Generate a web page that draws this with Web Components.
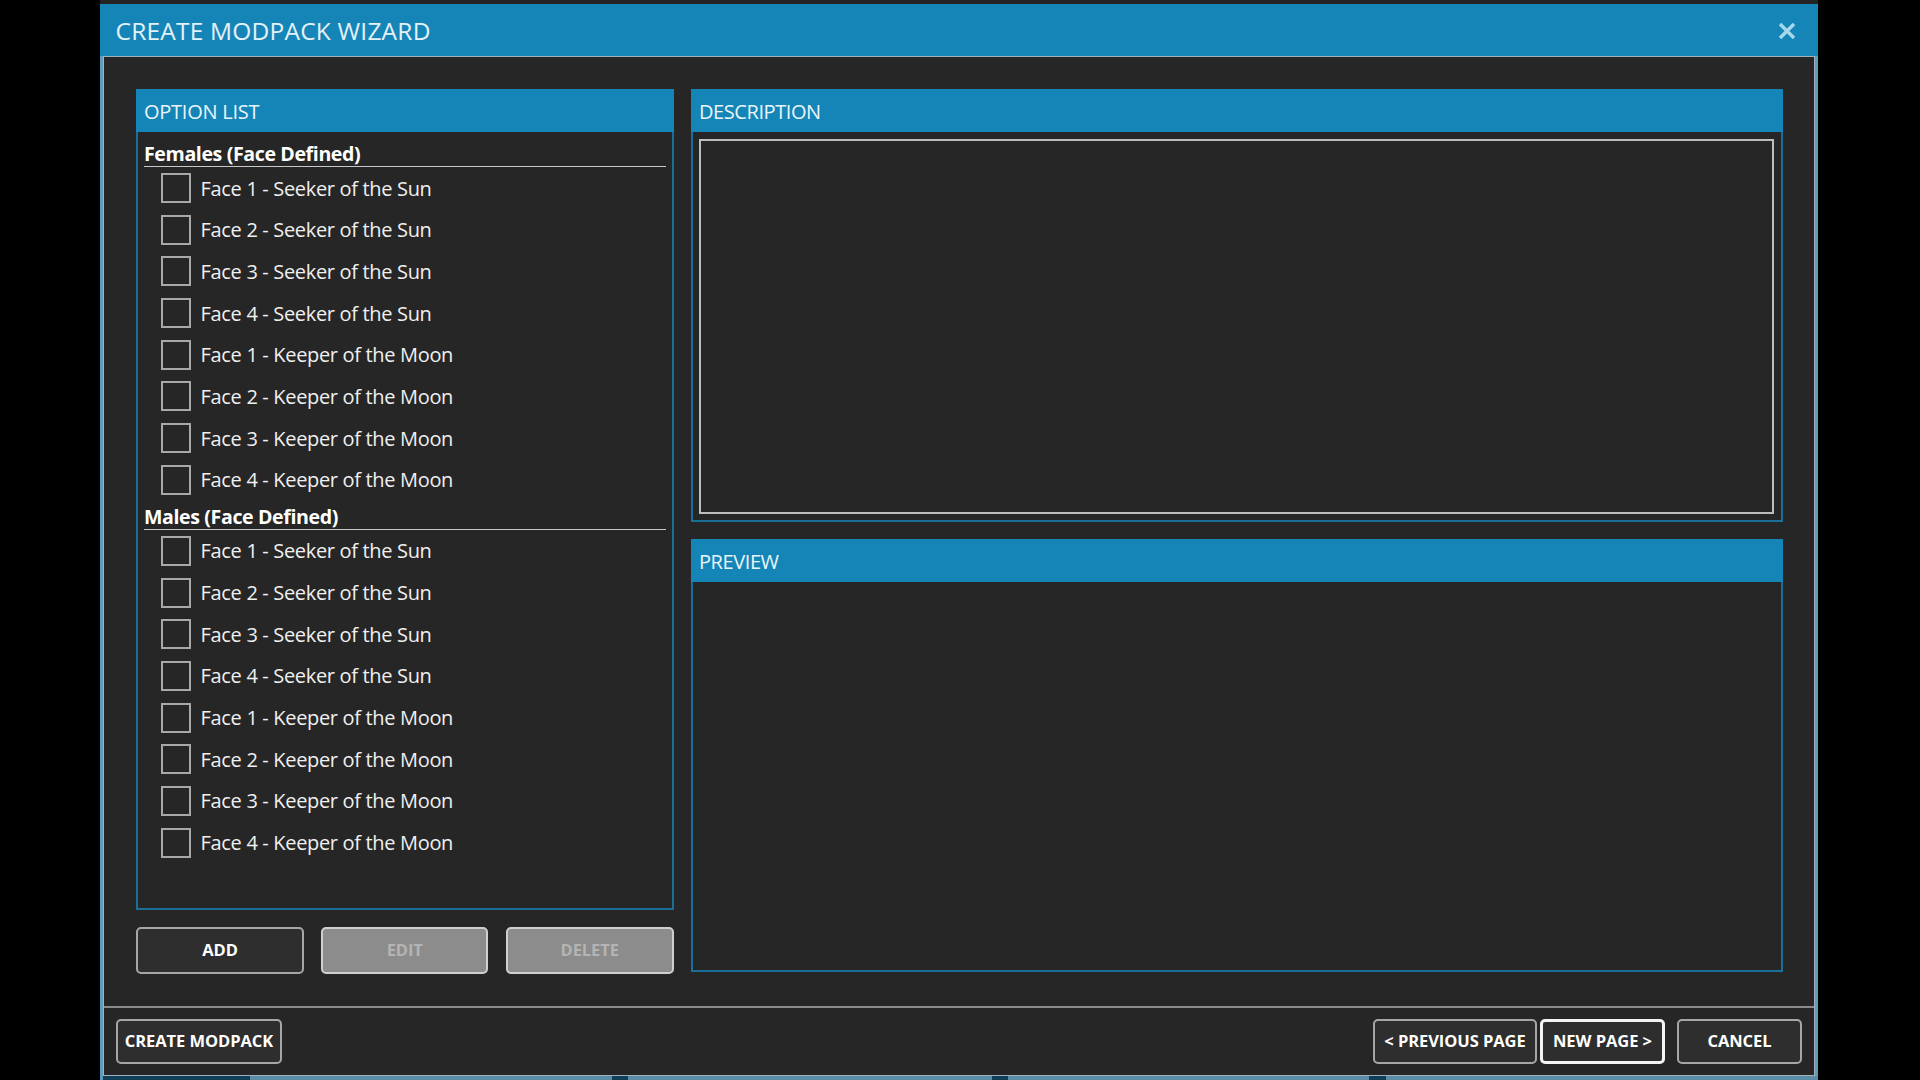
<!DOCTYPE html>
<html><head><meta charset="utf-8"><title>Create Modpack Wizard</title>
<style>
html,body{margin:0;padding:0;background:#000;height:100%;overflow:hidden}
body{font-family:"Open Sans","Liberation Sans",sans-serif;color:#fff}
</style></head><body>
<wizard-window heading="CREATE MODPACK WIZARD">
  <wizard-panel heading="OPTION LIST" slot="list" spacing="-.25px">
    <option-group label="Females (Face Defined)">
      <option-row>Face 1 - Seeker of the Sun</option-row>
      <option-row>Face 2 - Seeker of the Sun</option-row>
      <option-row>Face 3 - Seeker of the Sun</option-row>
      <option-row>Face 4 - Seeker of the Sun</option-row>
      <option-row>Face 1 - Keeper of the Moon</option-row>
      <option-row>Face 2 - Keeper of the Moon</option-row>
      <option-row>Face 3 - Keeper of the Moon</option-row>
      <option-row>Face 4 - Keeper of the Moon</option-row>
    </option-group>
    <option-group label="Males (Face Defined)">
      <option-row>Face 1 - Seeker of the Sun</option-row>
      <option-row>Face 2 - Seeker of the Sun</option-row>
      <option-row>Face 3 - Seeker of the Sun</option-row>
      <option-row>Face 4 - Seeker of the Sun</option-row>
      <option-row>Face 1 - Keeper of the Moon</option-row>
      <option-row>Face 2 - Keeper of the Moon</option-row>
      <option-row>Face 3 - Keeper of the Moon</option-row>
      <option-row>Face 4 - Keeper of the Moon</option-row>
    </option-group>
  </wizard-panel>
  <wizard-button slot="actions" style="width:168px">ADD</wizard-button>
  <wizard-button slot="actions" disabled style="width:167px">EDIT</wizard-button>
  <wizard-button slot="actions" disabled style="width:168.5px">DELETE</wizard-button>
  <wizard-panel heading="DESCRIPTION" slot="description"><text-box></text-box></wizard-panel>
  <wizard-panel heading="PREVIEW" slot="preview"></wizard-panel>
  <wizard-button slot="footer-left" style="width:166px;height:45px">CREATE MODPACK</wizard-button>
  <wizard-button slot="footer-right" style="width:164px;height:45px;margin-right:3px">&lt; PREVIOUS PAGE</wizard-button>
  <wizard-button slot="footer-right" primary style="width:125px;height:45px;margin-right:12px">NEW PAGE &gt;</wizard-button>
  <wizard-button slot="footer-right" style="width:125px;height:45px">CANCEL</wizard-button>
</wizard-window>
<script>
function def(name, html){
  customElements.define(name, class extends HTMLElement{
    constructor(){super();this.attachShadow({mode:'open'}).innerHTML=html(this);}
  });
}
def('wizard-window',()=>`<style>
:host{display:block;width:1718px;height:1080px;margin-left:100px;box-sizing:border-box;padding-top:4px;
  background:linear-gradient(#232323 4px,#5f9bbb 4px);
  font-family:"Open Sans","Liberation Sans",sans-serif}
.bar{height:52px;background:#1585b8;display:flex;align-items:center;justify-content:space-between;padding:0 22px 0 15.5px;box-sizing:border-box}
.title{font-size:24.5px;letter-spacing:.2px;color:#e4f1f7;font-weight:400;padding-top:1px}
.bar svg{width:18px;height:18px;display:block;margin-top:1.5px}
.frame{margin:0 3px;height:1020px;box-sizing:border-box;border:1.5px solid #9fb3bf;background:#262626;display:flex;flex-direction:column}
.main{flex:1;min-height:0;display:grid;grid-template-columns:538px 1092px;column-gap:17px;padding:32px 0 32px 32px;box-sizing:border-box}
.left{display:flex;flex-direction:column;gap:17.5px;min-height:0}
.left ::slotted(wizard-panel){flex:1;min-height:0}
.actions{display:flex;justify-content:space-between;height:47px;flex:none}
.right{display:grid;grid-template-rows:433px 433px;row-gap:17px}
.foot{height:69px;box-sizing:border-box;border-top:2px solid #8a8a8a;display:flex;justify-content:space-between;padding:11px 12px 0}
.group{display:flex}
.strip{height:4px;margin:0;background:linear-gradient(90deg,#5f9bbb 0,#5f9bbb 3px,#123f57 3px,#123f57 150px,#5b8ca5 150px,#5b8ca5 512px,#123f57 512px,#123f57 528px,#5b8ca5 528px,#5b8ca5 892px,#123f57 892px,#123f57 908px,#5b8ca5 908px,#5b8ca5 1269px,#123f57 1269px,#123f57 1286px,#5b8ca5 1286px)}
</style>
<div class="bar"><span class="title">CREATE MODPACK WIZARD</span>
<svg viewBox="0 0 18 18" aria-label="Close"><path d="M2 2 16 16M16 2 2 16" stroke="#a6d8eb" stroke-width="3.4" fill="none"/></svg></div>
<div class="frame"><div class="main">
  <div class="left"><slot name="list"></slot><div class="actions"><slot name="actions"></slot></div></div>
  <div class="right"><slot name="description"></slot><slot name="preview"></slot></div>
</div>
<div class="foot"><div class="group"><slot name="footer-left"></slot></div><div class="group"><slot name="footer-right"></slot></div></div>
</div><div class="strip"></div>`);
def('wizard-panel',el=>`<style>
:host{display:flex;flex-direction:column;box-sizing:border-box;border:solid #1a6f99;border-width:0 2px 2px;min-height:0}
.head{height:43px;margin:0 -2px;background:#1585b8;color:#e9f5fa;font-size:20px;letter-spacing:${el.getAttribute('spacing')||'-.42px'};display:flex;align-items:center;padding:1.5px 8px 0;flex:none;box-sizing:border-box}
.body{flex:1;min-height:0;padding:5.7px 6px 0;box-sizing:border-box;display:flex;flex-direction:column}
</style><div class="head">${el.getAttribute('heading')}</div><div class="body"><slot></slot></div>`);
def('option-group',el=>`<style>
:host{display:block}
.label{height:29.6px;box-sizing:border-box;padding-top:3px;border-bottom:1.7px solid #c8c8c8;font-weight:700;font-size:19.6px;letter-spacing:-.39px;line-height:25px;color:#fff;white-space:nowrap;margin-right:.5px}
</style><div class="label">${el.getAttribute('label')}</div><slot></slot>`);
def('option-row',()=>`<style>
:host{display:flex;align-items:center;height:41.67px;padding-left:16.6px;font-size:20px;letter-spacing:-.33px;color:#f0f0f0;white-space:nowrap}
.box{width:30px;height:30px;box-sizing:border-box;border:2px solid #a8a8a8;flex:none;margin-right:10px}
</style><span class="box"></span><span><slot></slot></span>`);
def('text-box',()=>`<style>
:host{display:block;flex:1;box-sizing:border-box;border:2px solid #bdbdbd;margin:1.3px 1px 6px 0}
</style>`);
def('wizard-button',el=>{
  const d=el.hasAttribute('disabled'),p=el.hasAttribute('primary');
  return `<style>
:host{display:flex;align-items:center;justify-content:center;box-sizing:border-box;height:47px;padding-bottom:2px;border-radius:5px;
 border:2px solid ${p?'#f4f4f4':d?'#cfcfcf':'#a6a6a6'};border-width:${p?'3px':'2px'};background:${d?'#8c8c8c':'#2e2e2e'};color:${d?'#b4b4b4':'#fff'};
 font-weight:700;font-size:16.5px;letter-spacing:-.06px;white-space:nowrap}
</style><slot></slot>`});
</script>
</body></html>
